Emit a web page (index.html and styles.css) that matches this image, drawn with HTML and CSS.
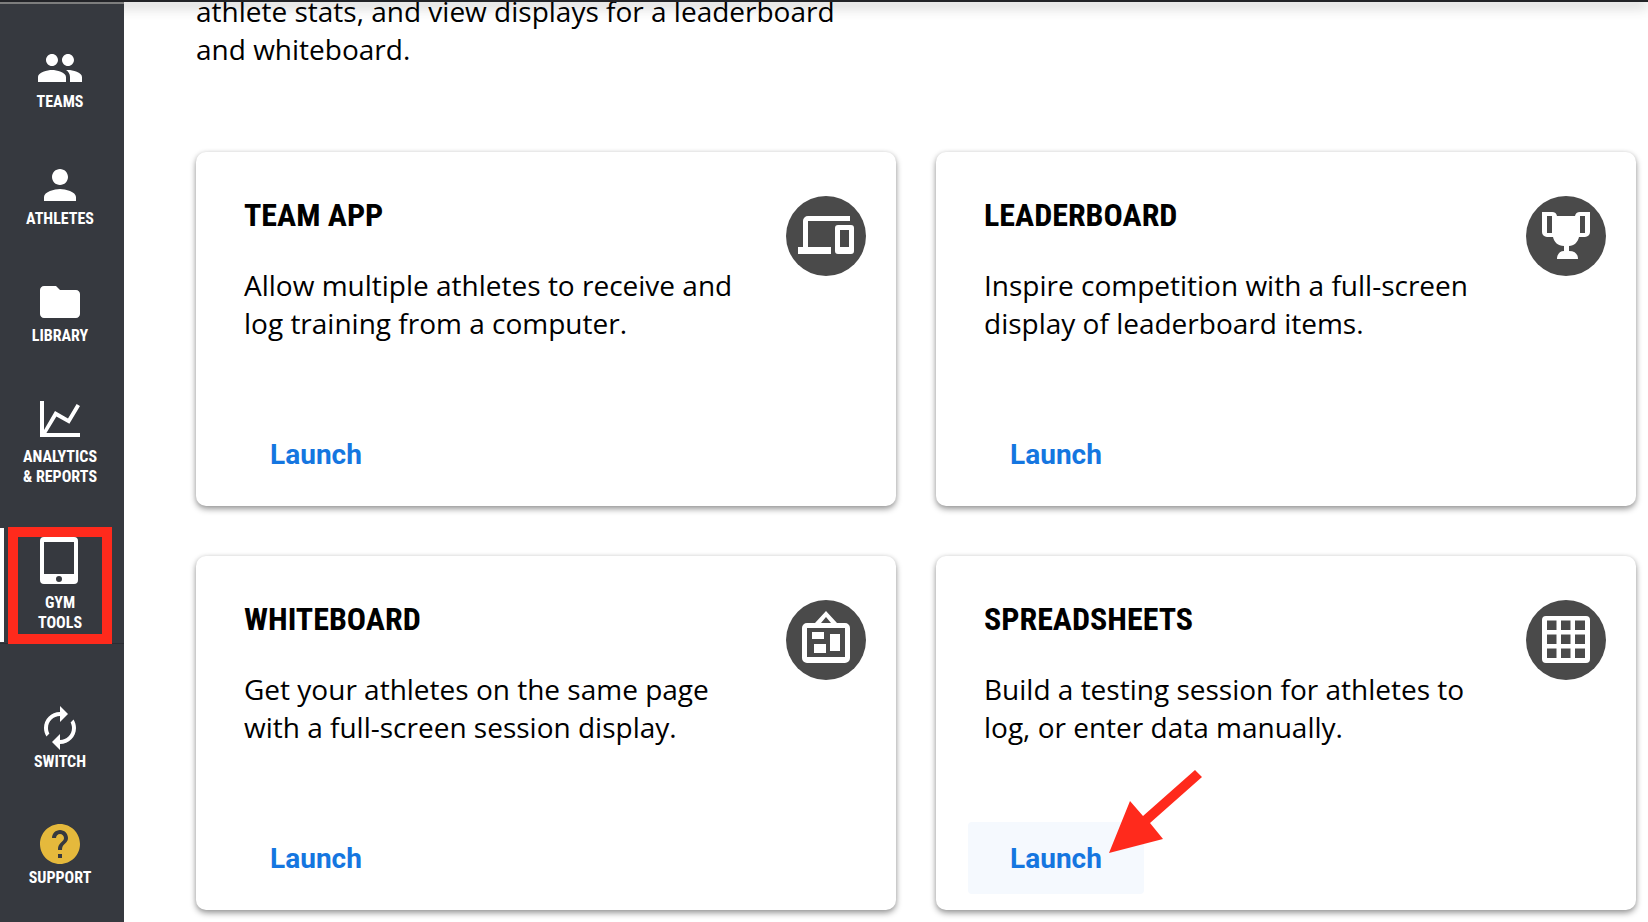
FILE: index.html
```html
<!DOCTYPE html>
<html lang="en">
<head>
    <meta charset="utf-8">
    <title>Gym Tools</title>
    <link rel="stylesheet" href="styles.css">
</head>
<body>
    <div class="topbar"></div>
    <div class="layout">
        <nav class="sidebar">
            <a class="nav-item" href="#">
                <svg viewBox="0 0 24 24"><path d="M16 11c1.660 0 2.990-1.340 2.990-3S17.660 5 16 5s-3 1.340-3 3 1.340 3 3 3zm-8 0c1.660 0 2.990-1.340 2.990-3S9.660 5 8 5 5 6.340 5 8s1.340 3 3 3zm0 2c-2.330 0-7 1.170-7 3.500V19h14v-2.500c0-2.330-4.670-3.500-7-3.500zm8 0c-.290 0-.620.020-.970.050 1.160.840 1.970 1.970 1.970 3.450V19h6v-2.500c0-2.330-4.670-3.500-7-3.500z"/></svg>
                <span>TEAMS</span>
            </a>
            <a class="nav-item" href="#">
                <svg viewBox="0 0 24 24"><path d="M12 12c2.210 0 4-1.790 4-4s-1.790-4-4-4-4 1.790-4 4 1.790 4 4 4zm0 2c-2.670 0-8 1.340-8 4v2h16v-2c0-2.660-5.330-4-8-4z"/></svg>
                <span>ATHLETES</span>
            </a>
            <a class="nav-item" href="#">
                <svg viewBox="0 0 24 24"><path d="M10 4H4c-1.100 0-2 .9-2 2v12c0 1.100.9 2 2 2h16c1.100 0 2-.9 2-2V8c0-1.100-.9-2-2-2h-8z"/></svg>
                <span>LIBRARY</span>
            </a>
            <a class="nav-item" href="#">
                <svg class="chart" viewBox="0 0 24 26"><path d="M2 3h2v14.500L9.500 8l6.500 3.700L20.300 4.500l1.700 1L16.700 14.400l-6.500-3.700L5.200 19H22v2H2z"/></svg>
                <span>ANALYTICS<br>&amp; REPORTS</span>
            </a>
            <a class="nav-item active" href="#">
                <svg class="tablet" viewBox="0 1 48 57"><path fill-rule="evenodd" d="M8 2h30a4 4 0 0 1 4 4v39a4 4 0 0 1-4 4H8a4 4 0 0 1-4-4V6a4 4 0 0 1 4-4zm0 5v32h30V7zm15 34a3 3 0 1 0 0 6 3 3 0 0 0 0-6z"/></svg>
                <span>GYM<br>TOOLS</span>
                <i class="highlight"></i>
            </a>
            <div class="nav-bottom">
                <a class="nav-item" href="#">
                    <svg viewBox="0 0 24 24"><path d="M12 6v3l4-4-4-4v3c-4.420 0-8 3.580-8 8 0 1.570.46 3.030 1.240 4.260L6.700 14.800c-.45-.83-.7-1.790-.7-2.800 0-3.310 2.690-6 6-6zm6.760 1.740L17.300 9.200c.44.84.7 1.790.7 2.800 0 3.310-2.690 6-6 6v-3l-4 4 4 4v-3c4.420 0 8-3.580 8-8 0-1.570-.46-3.030-1.240-4.260z"/></svg>
                    <span>SWITCH</span>
                </a>
                <a class="nav-item" href="#">
                    <svg class="help" viewBox="0 0 24 24"><path d="M12 2C6.480 2 2 6.480 2 12s4.480 10 10 10 10-4.480 10-10S17.520 2 12 2zm1 17h-2v-2h2v2zm2.070-7.750l-.9.920C13.450 12.900 13 13.500 13 15h-2v-.5c0-1.100.45-2.100 1.170-2.830l1.240-1.260c.37-.36.59-.86.59-1.410 0-1.100-.9-2-2-2s-2 .9-2 2H8c0-2.210 1.790-4 4-4s4 1.790 4 4c0 .88-.36 1.680-.93 2.250z"/></svg>
                    <span>SUPPORT</span>
                </a>
            </div>
        </nav>

        <main class="content">
            <div class="intro">
                <p>athlete stats, and view displays for a leaderboard and whiteboard.</p>
            </div>

            <div class="cards">
                <section class="card">
                    <div class="card-top">
                        <div class="card-text">
                            <h2>TEAM APP</h2>
                            <p>Allow multiple athletes to receive and log training from a computer.</p>
                        </div>
                        <svg class="card-icon" viewBox="0 0 80 80">
                            <circle cx="40" cy="40" r="40"/>
                            <path d="M17 51V25a5 5 0 0 1 5-5h42v5H22v26h23v7H12v-7z"/>
                            <path fill-rule="evenodd" d="M52 29h13a3 3 0 0 1 3 3v23a3 3 0 0 1-3 3H52a3 3 0 0 1-3-3V32a3 3 0 0 1 3-3zm2 5v17h9V34z"/>
                        </svg>
                    </div>
                    <div class="card-actions"><button class="launch">Launch</button></div>
                </section>

                <section class="card">
                    <div class="card-top">
                        <div class="card-text">
                            <h2>LEADERBOARD</h2>
                            <p>Inspire competition with a full-screen display of leaderboard items.</p>
                        </div>
                        <svg class="card-icon" viewBox="0 0 80 80">
                            <circle cx="40" cy="40" r="40"/>
                            <path fill-rule="evenodd" d="M16 16h10a5 5 0 0 1 5 4h18a5 5 0 0 1 5-4h10v20a5 5 0 0 1-5 5h-6c-1 5-5 9-10 9v5c6 0 9 3 9 8H31c0-5 3-8 7-8v-5c-6 0-10-4-11-9h-6a5 5 0 0 1-5-5zm5 4v17h5V20zm33 0v17h5V20z"/>
                        </svg>
                    </div>
                    <div class="card-actions"><button class="launch">Launch</button></div>
                </section>

                <section class="card">
                    <div class="card-top">
                        <div class="card-text">
                            <h2>WHITEBOARD</h2>
                            <p>Get your athletes on the same page with a full-screen session display.</p>
                        </div>
                        <svg class="card-icon" viewBox="0 0 80 80">
                            <circle cx="40" cy="40" r="40"/>
                            <path fill-rule="evenodd" d="M21 23h8l11-12 11 12h8a5 5 0 0 1 5 5v30a5 5 0 0 1-5 5H21a5 5 0 0 1-5-5V28a5 5 0 0 1 5-5zm14 0h10l-5-6zm-14 5v29h38V28z"/>
                            <path d="M26 32h12v7H26zM28 44h12v9H28zM44 34h10v17H44z"/>
                        </svg>
                    </div>
                    <div class="card-actions"><button class="launch">Launch</button></div>
                </section>

                <section class="card">
                    <div class="card-top">
                        <div class="card-text">
                            <h2>SPREADSHEETS</h2>
                            <p>Build a testing session for athletes to log, or enter data manually.</p>
                        </div>
                        <svg class="card-icon" viewBox="0 0 80 80">
                            <circle cx="40" cy="40" r="40"/>
                            <path fill-rule="evenodd" d="M20 16h40a4 4 0 0 1 4 4v39a4 4 0 0 1-4 4H20a4 4 0 0 1-4-4V20a4 4 0 0 1 4-4zm1 4.500v9.500h9.500v-9.500zm14 0v9.500h9.500v-9.500zm14 0v9.500h10v-9.500zm-28 14v9.500h9.500v-9.500zm14 0v9.500h9.500v-9.500zm14 0v9.500h10v-9.500zm-28 14v9.500h9.500v-9.500zm14 0v9.500h9.500v-9.500zm14 0v9.500h10v-9.500z"/>
                        </svg>
                    </div>
                    <div class="card-actions">
                        <button class="launch hovered">Launch</button>
                        <svg class="arrow" viewBox="0 0 94 84"><path d="M0 83L21 31l13 15L86 0l7 7-52 46 13 16z"/></svg>
                    </div>
                </section>
            </div>
        </main>
    </div>
</body>
</html>
```

FILE: styles.css
```css
* {
    box-sizing: border-box;
}
body {
    margin: 0;
    height: 100vh;
    display: flex;
    flex-direction: column;
    overflow: hidden;
    background-color: #fff;
    color: #000;
    font-family: "Open Sans", sans-serif;
}
.topbar {
    flex: none;
    height: 2px;
    background-color: #222327;
    box-shadow: 0 2px 14px rgba(0, 0, 0, 0.8);
    position: relative;
}
.layout {
    flex: 1;
    display: flex;
    min-height: 0;
}
.sidebar {
    position: relative;
    flex: none;
    width: 124px;
    padding: 40px 4px 0 0;
    display: flex;
    flex-direction: column;
    gap: 49px;
    background-color: #36393f;
    border-top: 2px solid #7d7d7d;
}
.nav-item {
    display: flex;
    flex-direction: column;
    align-items: center;
    color: #fff;
    font-family: "Roboto Condensed", Roboto, sans-serif;
    font-size: 16px;
    font-weight: bold;
    line-height: 20px;
    text-align: center;
    text-decoration: none;
}
.nav-item svg {
    width: 48px;
    height: 48px;
    fill: #fff;
}
.nav-item .chart {
    height: 52px;
}
.nav-item .tablet {
    height: 57px;
}
.nav-item .help {
    fill: #e5b93c;
}
.active {
    position: relative;
}
.active::before {
    content: "";
    position: absolute;
    left: 0;
    top: -8px;
    bottom: -9px;
    width: 4px;
    background-color: #fff;
}
.highlight {
    position: absolute;
    z-index: 1;
    left: 8px;
    right: 8px;
    top: -9px;
    bottom: -11px;
    border: 10px solid #ff2a1c;
}
.nav-bottom {
    display: flex;
    flex-direction: column;
    gap: 48px;
    margin-top: -39px;
    margin-right: -4px;
    padding: 60px 4px 0 0;
    border-top: 1px solid #2b2d33;
}
.content {
    flex: 1;
    padding: 0 12px 0 72px;
}
.intro {
    display: flex;
    align-items: flex-end;
    height: 66px;
    max-width: 660px;
    margin-bottom: 84px;
}
p {
    margin: 0;
    font-size: 28px;
    line-height: 38px;
}
.cards {
    display: grid;
    grid-template-columns: 1fr 1fr;
    gap: 50px 40px;
}
.card {
    display: flex;
    flex-direction: column;
    justify-content: space-between;
    min-height: 354px;
    padding: 44px 30px 16px 32px;
    border-radius: 10px;
    background-color: #fff;
    box-shadow: 0 3px 6px rgba(0, 0, 0, 0.4), 0 0 4px rgba(0, 0, 0, 0.08);
}
.card-top {
    display: flex;
    justify-content: space-between;
    padding-left: 16px;
}
.card-text {
    max-width: 500px;
}
h2 {
    margin: 0 0 32px;
    font-family: "Roboto Condensed", Roboto, sans-serif;
    font-size: 32px;
    font-weight: bold;
    line-height: 38px;
}
.card-icon {
    flex: none;
    width: 80px;
    height: 80px;
    fill: #fff;
}
.card-icon circle {
    fill: #4a4a4a;
}
.card-actions {
    position: relative;
}
.launch {
    width: 176px;
    height: 72px;
    border: none;
    border-radius: 4px;
    background-color: transparent;
    color: #1576e0;
    font-family: Roboto, sans-serif;
    font-size: 28px;
    font-weight: bold;
    cursor: pointer;
}
.launch:hover,
.launch.hovered {
    background-color: #f5f9fe;
}
.arrow {
    position: absolute;
    left: 141px;
    top: -52px;
    width: 94px;
    height: 84px;
    fill: #ff2a1c;
}
```
